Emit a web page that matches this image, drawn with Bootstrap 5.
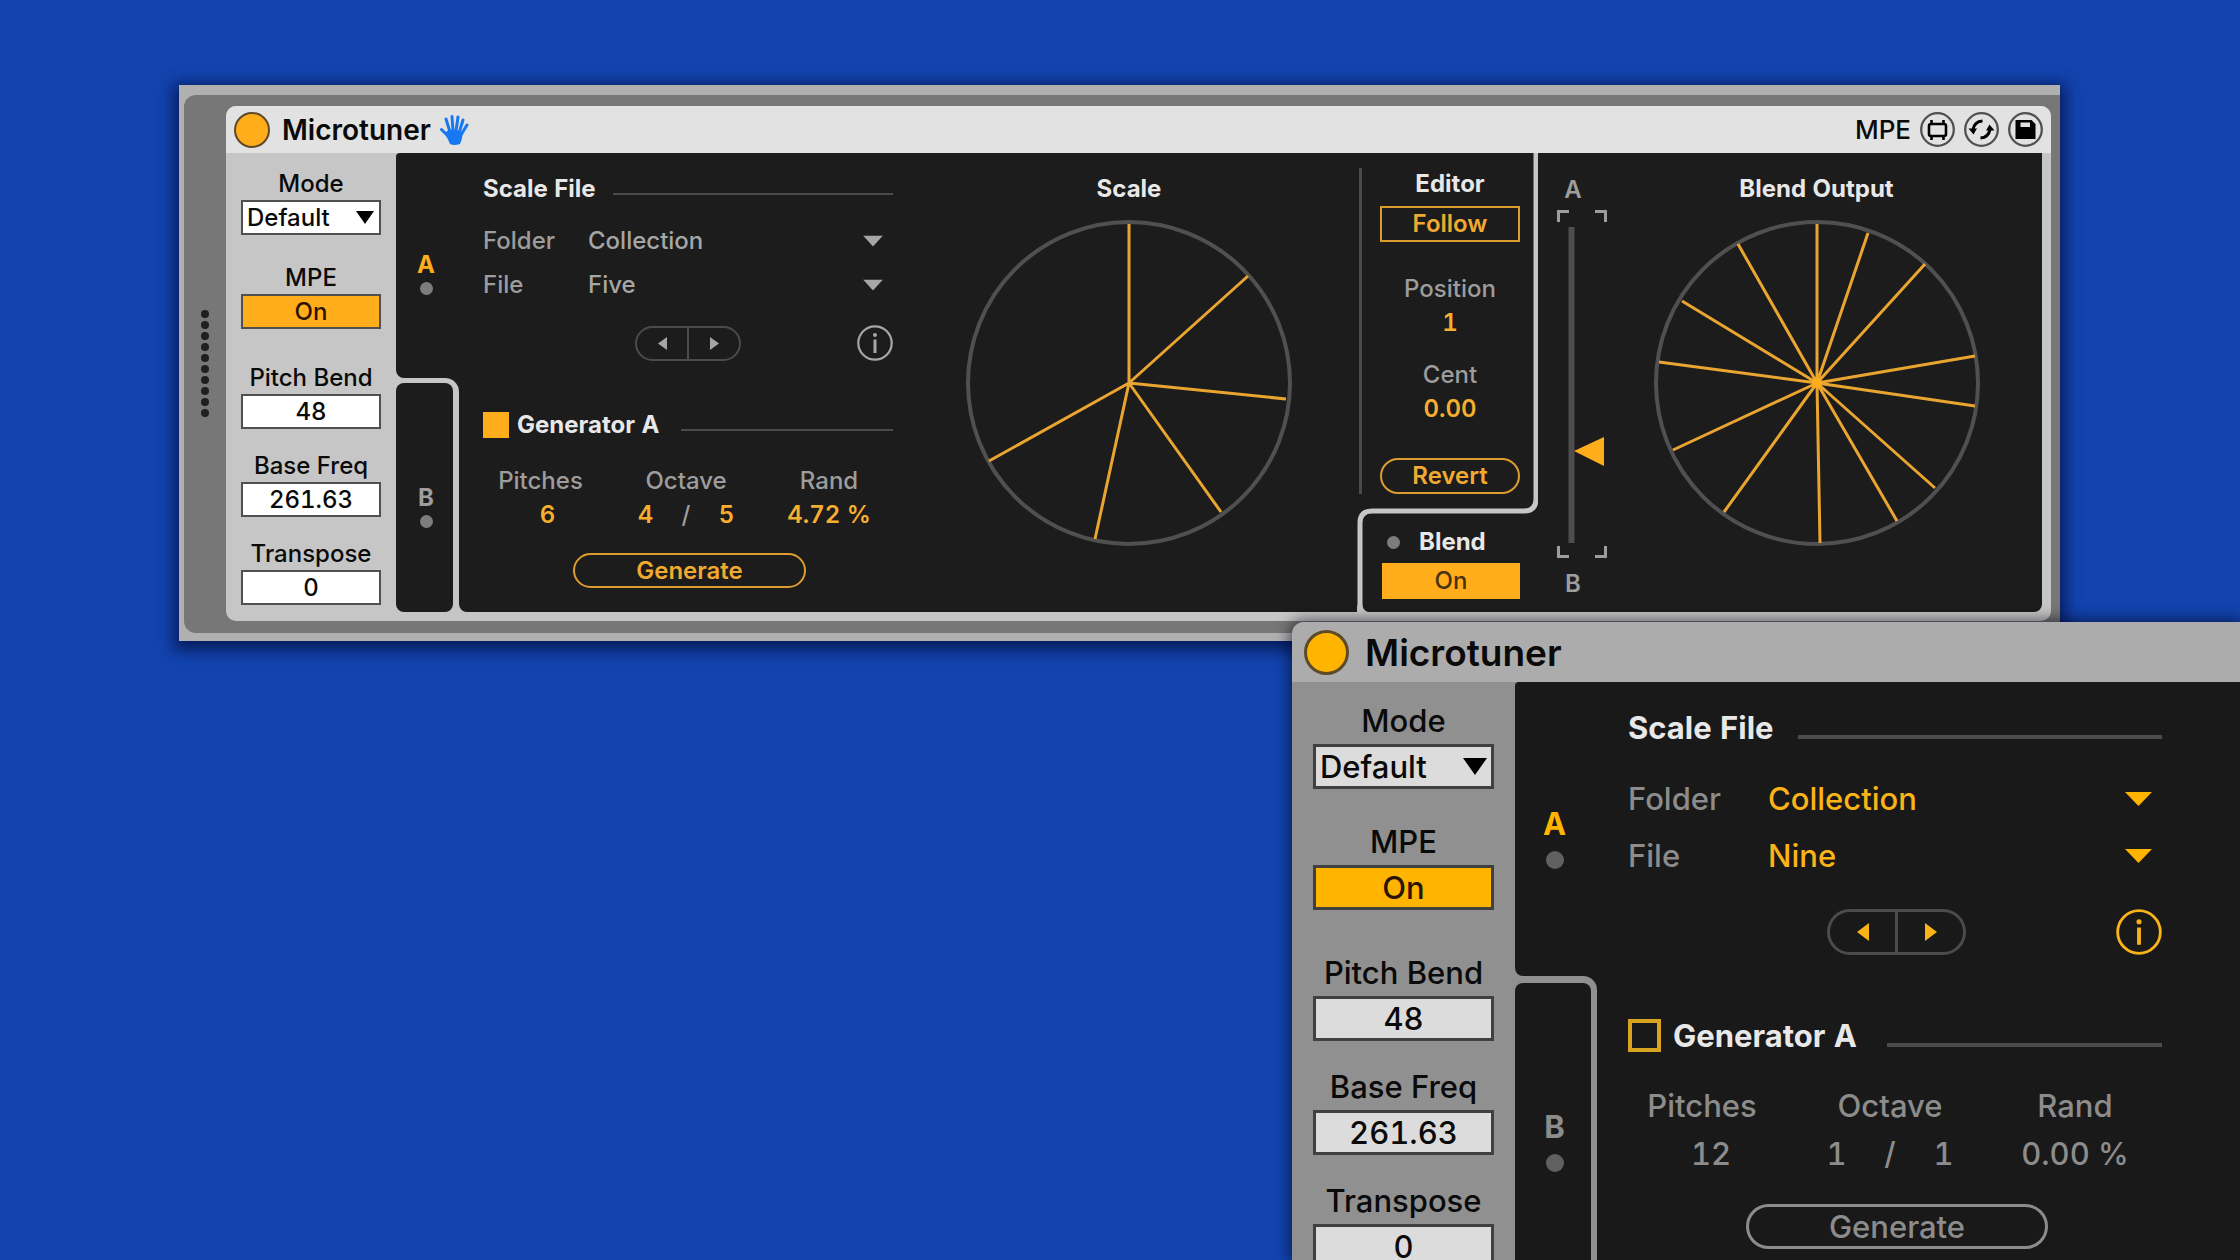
<!DOCTYPE html>
<html lang="en">
<head>
<meta charset="utf-8">
<meta name="viewport" content="width=device-width, initial-scale=1">
<title>Microtuner</title>
<link href="https://cdn.jsdelivr.net/npm/bootstrap@5.3.0/dist/css/bootstrap.min.css" rel="stylesheet">
<style>
  body { background: #1243ae; font-family: Inter, "Liberation Sans", sans-serif; min-height: 100vh; overflow: hidden; }

  /* per-window size and colour sets */
  .device {
    --fs: 24px; --title-fs: 28px; --head-h: 47px; --lamp: 36px;
    --side-w: 170px; --side-pad: 15px; --box-w: 140px; --box-h: 35px; --label-h: 32px; --label-gap: 0px; --bw: 2px;
    --gap-a: 27px; --gap-b: 33px; --gap-c: 21px;
    --tab-w: 63px; --tab-a-h: 225px; --tab-pad: 5px; --tab-a-top: 100px; --tab-b-top: 103px; --dot: 13px; --dot-top: 5px;
    --sec-w: 410px; --sec-x: 24px; --sec-y: 18px; --row-h: 36px; --pick-h: 44px; --pick-x: 105px; --pick-top: 12px;
    --nav-top: 18px; --nav-x: 152px; --nav-w: 106px; --nav-h: 35px; --gen-top: 46px; --chk: 26px;
    --stat-top: 21px; --stat-h: 34px; --stat-cols: 115px 176px 110px; --num-w: 30px; --slash-w: 51px; --pitch-pad: 14px;
    --go-top: 21px; --go-x: 90px; --go-w: 233px; --rule: 2px; --rule-top: 10px; --rule-x: 17px; --rule-gen: 22px;
    --head: #e2e2e2; --chrome: #c6c6c6; --field: #fff; --panel: #1c1c1c; --accent: #ffad1a; --accent-line: #dd9d2e;
    --edge: #505050; --dim: #9d9d9d; --pick: #a6a6a6; --value: #f6ae2f; --go: #f0aa30; --dotc: #7d7d7d;
    font-size: var(--fs); font-weight: 500; color: #0a0a0a; font-variant-numeric: tabular-nums;
  }
  .device-front {
    --fs: 31px; --title-fs: 37px; --head-h: 60px; --lamp: 45px;
    --side-w: 223px; --side-pad: 22px; --box-w: 181px; --box-h: 45px; --label-h: 34px; --label-gap: 6px; --bw: 3px;
    --gap-a: 36px; --gap-b: 46px; --gap-c: 29px;
    --tab-w: 82px; --tab-a-h: 294px; --tab-pad: 7px; --tab-a-top: 126px; --tab-b-top: 128px; --dot: 18px; --dot-top: 12px;
    --sec-w: 534px; --sec-x: 31px; --sec-y: 22px; --row-h: 46px; --pick-h: 57px; --pick-x: 140px; --pick-top: 20px;
    --nav-top: 25px; --nav-x: 199px; --nav-w: 139px; --nav-h: 46px; --gen-top: 57px; --chk: 33px;
    --stat-top: 24px; --stat-h: 48px; --stat-cols: 148px 228px 142px; --num-w: 40px; --slash-w: 67px; --pitch-pad: 18px;
    --go-top: 26px; --go-x: 118px; --go-w: 302px; --rule: 4px; --rule-top: 19px; --rule-x: 24px; --rule-gen: 30px;
    --head: #acacac; --chrome: #909090; --field: #dcdcdc; --panel: #191919; --accent: #ffb400; --accent-line: #d9a322;
    --edge: #404040; --dim: #8c8c8c; --pick: #fbb417; --value: #8c8c8c; --go: #8c8c8c; --dotc: #606060;
  }

  /* floating windows */
  .win-back { position: absolute; left: 179px; right: 180px; top: 85px; background: #b0b0b0; padding: 10px 0 8px 5px;
    box-shadow: 0 4px 14px 5px rgba(0, 5, 40, .62); }
  .rack { background: #777; border-radius: 12px 0 0 12px; padding: 11px 9px 12px 0; }
  .grip { width: 42px; flex: none; }
  .win-front { position: absolute; left: 1292px; right: 0; top: 622px; bottom: 0; overflow: hidden;
    background: var(--chrome); border-radius: 12px 0 0 0; }
  .front-shadow { position: absolute; left: 1292px; right: 0; top: 622px; bottom: 0; border-radius: 12px 0 0 0; box-shadow: 0 0 15px 2px rgba(0, 0, 20, .6); }
  .shell { background: var(--chrome); border-radius: 10px; overflow: hidden; }
  .device-body { padding-bottom: 9px; min-height: 468px; }

  .titlebar { background: var(--head); height: var(--head-h); }
  .title-text { font-size: var(--title-fs); font-weight: 600; line-height: 1; margin: 0 0 0 12px; }
  .device-front .title-text { margin-left: 16px; }
  .lamp { width: var(--lamp); height: var(--lamp); border-radius: 50%; border: var(--bw) solid #5c4a28; background: var(--accent); padding: 0; }
  .tool { width: 35px; height: 35px; padding: 0; border: 0; background: none; display: block; }
  .tool svg, .nav-btn svg, .info svg { display: block; }
  .tools { gap: 9px; }
  .mpe-tag { font-size: 26px; line-height: 1; }

  .side { width: var(--side-w); flex: none; padding-top: var(--side-pad); }
  .side label, .side .cap { line-height: var(--label-h); padding-bottom: var(--label-gap); display: block; }
  .box { width: var(--box-w); height: var(--box-h); border: var(--bw) solid var(--edge); background: var(--field); color: #0a0a0a;
    padding: 0; text-align: center; border-radius: 0; line-height: 1; font-size: var(--fs); font-weight: 500; font-variant-numeric: tabular-nums; display: block; }
  select.box { appearance: none; text-align: left; padding-left: 4px; }
  .pick-wrap { position: relative; }
  .pick-wrap svg { position: absolute; top: 50%; transform: translateY(-50%); pointer-events: none; }
  .pick-wrap .box-arrow { right: 7px; }
  .box-on { background: var(--accent); color: #2a1600; }
  .gap-a { margin-top: var(--gap-a); } .gap-b { margin-top: var(--gap-b); } .gap-c { margin-top: var(--gap-c); }

  .tabs { width: var(--tab-w); flex: none; background: linear-gradient(90deg, var(--chrome) 50%, var(--panel) 50%); }
  .tab-btn { background: var(--panel); border: 0; display: flex; flex-direction: column; align-items: center; width: 100%; font-weight: 700; line-height: 1; color: var(--dim); }
  .tab-a { height: var(--tab-a-h); border-radius: 4px 0 0 8px; padding: var(--tab-a-top) 3px 0 0; color: var(--accent); }
  .tab-b-frame { background: var(--chrome); padding: var(--tab-pad) 6px 0 0; border-radius: 0 14px 0 0; flex: 1; display: flex; }
  .tab-b { border-radius: 8px; padding: var(--tab-b-top) 0 0 3px; }
  .dot { width: var(--dot); height: var(--dot); border-radius: 50%; background: var(--dotc); display: block; flex: none; }
  .tab-btn .dot { margin-top: var(--dot-top); }

  .panel { background: var(--panel); color: var(--dim); }
  .panel-main { border-radius: 0 0 0 8px; padding-left: var(--sec-x); }
  .section { width: var(--sec-w); flex: none; padding-top: var(--sec-y); }
  .head-row { height: var(--row-h); }
  .strong { color: #e8e8e8; font-weight: 700; font-size: var(--fs); line-height: 1; margin: 0; }
  .hrule { flex: 1; height: var(--rule); background: #4b4b4b; margin-top: var(--rule-top); margin-left: var(--rule-x); }
  .gen-row .hrule { margin-left: var(--rule-gen); }
  .pick-row { height: var(--pick-h); line-height: 1; }
  .pick-row label { width: var(--pick-x); flex: none; }
  .pick { appearance: none; background: none; border: 0; padding: 0; width: 100%; color: var(--pick); font-size: var(--fs); font-weight: 500; line-height: var(--pick-h); }
  .pick-wrap .pick-arrow { right: 10px; }
  .pick-first { margin-top: var(--pick-top); }
  .nav-row { margin-top: var(--nav-top); }
  .nav-pill { margin-left: var(--nav-x); width: var(--nav-w); height: var(--nav-h); border: var(--bw) solid #4b4b4b; border-radius: 40px; overflow: hidden; }
  .nav-btn { flex: 1; background: none; border: 0; color: var(--pick); padding: 0; display: flex; justify-content: center; align-items: center; }
  .nav-btn + .nav-btn { border-left: var(--bw) solid #4b4b4b; }
  .info { background: none; border: 0; padding: 0; color: var(--pick); }
  .gen-row { margin-top: var(--gen-top); }
  .chk { appearance: none; width: var(--chk); height: var(--chk); margin: 0; border: 3px solid var(--accent-line); flex: none; }
  .device-front .chk { border-width: 4px; }
  .device .chk:checked { background: var(--accent); border-color: var(--accent); }
  .stats { display: grid; grid-template-columns: var(--stat-cols); grid-auto-rows: var(--stat-h); line-height: var(--stat-h); text-align: center; margin-top: var(--stat-top); }
  .num { background: none; border: 0; padding: 0; width: 100%; color: var(--value); text-align: center; font-weight: 600; font-size: var(--fs); font-variant-numeric: tabular-nums; line-height: var(--stat-h); }
  .device-front .num { font-weight: 500; }
  .num-pitch { padding-left: var(--pitch-pad); }
  .num-oct { width: var(--num-w); }
  .slash { width: var(--slash-w); }
  .pill { border: var(--bw) solid var(--accent-line); color: var(--go); background: none; border-radius: 40px; padding: 0; line-height: 1; font-weight: 600; height: var(--box-h); font-size: var(--fs); }
  .go { margin: var(--go-top) 0 0 var(--go-x); width: var(--go-w); }
  .device-front .go { border-color: #8c8c8c; font-weight: 500; }

  .pie-title { line-height: 36px; padding-top: 18px; margin-bottom: 11px; }
  .editor-col { width: 181px; flex: none; position: relative; }
  .divider { position: absolute; left: 0; top: 0; pointer-events: none; }
  .editor { margin: 15px 0 0 2px; border-left: 3px solid #4b4b4b; text-align: center; line-height: 34px; }
  .editor .strong, .blend-head .strong { line-height: 32px; }
  .editor label { margin-top: 30px; }
  .editor .num + label { margin-top: 18px; }
  .follow { border-radius: 0; width: 140px; height: 36px; margin-top: 6px; }
  .revert { margin-top: 32px; }
  .blend-head { margin-top: 32px; padding-left: 30px; gap: 19px; }
  .blend-on { margin: 5px 0 0 25px; width: 138px; height: 36px; border: 0; background: var(--accent); color: #4a3210; line-height: 1; padding: 0; font-weight: 500; }
  .panel-out { width: 504px; border-radius: 0 0 8px 0; padding-right: 16px; margin-right: 9px; }
  .fader { width: 50px; margin-left: 19px; flex: none; font-weight: 600; padding-top: 19px; line-height: 36px; }
  .fader .end { width: 32px; text-align: center; display: block; }
  .fader-body { position: relative; margin: 2px 0 8px; }
  .fader-body svg { display: block; }
  .fader-body input { position: absolute; inset: 0; width: 100%; height: 100%; opacity: 0; margin: 0; writing-mode: vertical-lr; }
</style>
<script src="https://cdn.jsdelivr.net/npm/bootstrap@5.3.0/dist/js/bootstrap.bundle.min.js"></script>
</head>
<body>

<!-- rear window: full device -->
<main class="win-back device">
  <div class="rack d-flex">
    <div class="grip d-flex align-items-center justify-content-center">
      <svg width="10" height="112" fill="#1f1f1f" aria-hidden="true"><circle cx="5" cy="6" r="4"/><circle cx="5" cy="17" r="4"/><circle cx="5" cy="28" r="4"/><circle cx="5" cy="39" r="4"/><circle cx="5" cy="50" r="4"/><circle cx="5" cy="61" r="4"/><circle cx="5" cy="72" r="4"/><circle cx="5" cy="83" r="4"/><circle cx="5" cy="94" r="4"/><circle cx="5" cy="105" r="4"/></svg>
    </div>
    <div class="shell flex-grow-1">
      <header class="titlebar d-flex align-items-center px-2">
        <button class="lamp" aria-label="Device on"></button>
        <h1 class="title-text">Microtuner</h1>
        <svg class="ms-2" width="30" height="32" viewBox="0 0 30 32" aria-hidden="true"><g stroke="#1778f2" stroke-width="3" stroke-linecap="round" fill="none"><path d="M11 18 7 5M14 17 13 2.500M17 17 19 3M20 19 24 6M22 21 28 11M10 23 2.500 15.500"/></g><path fill="#1778f2" d="M8 17Q14 14 22 18Q25 21 21 30Q15 32 11 30Q9 25 6 20Z"/></svg>
        <div class="tools ms-auto d-flex align-items-center">
          <span class="mpe-tag">MPE</span>
          <button class="tool" aria-label="Map"><svg width="35" height="35" viewBox="-17.500 -17.500 35 35"><circle r="16.300" fill="none" stroke="#505050" stroke-width="2.300"/><g fill="none" stroke="#000" stroke-width="2.600"><rect x="-8.500" y="-5.500" width="17" height="12" rx="2"/><path d="M-6-9.500V-5M6-9.500V-5M-6 6V10.500M6 6V10.500"/></g></svg></button>
          <button class="tool" aria-label="Swap"><svg width="35" height="35" viewBox="-17.500 -17.500 35 35"><circle r="16.300" fill="none" stroke="#505050" stroke-width="2.300"/><g fill="none" stroke="#000" stroke-width="3"><path d="M1-8.500Q-7-8-8.500 0M-1 8.500Q7 8 8.500 0"/></g><path d="M-13-1H-4.500L-8 5ZM13 1H4.500L8-5Z"/></svg></button>
          <button class="tool" aria-label="Save"><svg width="35" height="35" viewBox="-17.500 -17.500 35 35"><circle r="16.300" fill="none" stroke="#505050" stroke-width="2.300"/><path fill-rule="evenodd" d="M-10-9.500H6L10-5.500V9.500H-10ZM-5-7V-2.500H4.500V-7Z"/></svg></button>
        </div>
      </header>

      <div class="device-body d-flex">
        <div class="side d-flex flex-column align-items-center text-center">
          <div><label for="m1">Mode</label>
            <div class="pick-wrap"><select class="box" id="m1"><option>Default</option></select>
              <svg class="box-arrow" width="18" height="14"><path d="M0 0H18L9 13Z"/></svg></div></div>
          <div class="gap-a"><span class="cap">MPE</span><button class="box box-on">On</button></div>
          <div class="gap-b"><label for="pb1">Pitch Bend</label><input class="box" id="pb1" value="48"></div>
          <div class="gap-c"><label for="bf1">Base Freq</label><input class="box" id="bf1" value="261.63"></div>
          <div class="gap-c"><label for="tr1">Transpose</label><input class="box" id="tr1" value="0"></div>
        </div>

        <nav class="tabs d-flex flex-column">
          <button class="tab-btn tab-a">A<span class="dot"></span></button>
          <div class="tab-b-frame"><button class="tab-btn tab-b">B<span class="dot"></span></button></div>
        </nav>

        <div class="panel panel-main flex-grow-1 d-flex">
          <section class="section">
            <div class="head-row d-flex align-items-center"><h2 class="strong">Scale File</h2><span class="hrule"></span></div>
            <div class="pick-row pick-first d-flex align-items-center"><label for="fo1">Folder</label>
              <div class="pick-wrap flex-grow-1"><select class="pick" id="fo1"><option>Collection</option></select><svg class="pick-arrow" width="20" height="11" fill="#a6a6a6"><path d="M0 0H20L10 11Z"/></svg></div></div>
            <div class="pick-row d-flex align-items-center"><label for="fi1">File</label>
              <div class="pick-wrap flex-grow-1"><select class="pick" id="fi1"><option>Five</option></select><svg class="pick-arrow" width="20" height="11" fill="#a6a6a6"><path d="M0 0H20L10 11Z"/></svg></div></div>
            <div class="nav-row d-flex align-items-center">
              <div class="nav-pill d-flex">
                <button class="nav-btn" aria-label="Previous"><svg width="9" height="13" fill="currentColor"><path d="M9 0V13L0 6.500Z"/></svg></button>
                <button class="nav-btn" aria-label="Next"><svg width="9" height="13" fill="currentColor"><path d="M0 0V13L9 6.500Z"/></svg></button>
              </div>
              <button class="info ms-auto" aria-label="Info"><svg width="36" height="36" viewBox="0 0 36 36"><circle cx="18" cy="18" r="16.700" fill="none" stroke="currentColor" stroke-width="2.200"/><path d="M18 14.500V28" stroke="currentColor" stroke-width="3"/><circle cx="18" cy="10" r="2" fill="currentColor"/></svg></button>
            </div>
            <div class="head-row gen-row d-flex align-items-center"><input type="checkbox" class="chk" id="g1" checked><label for="g1" class="strong ps-2">Generator A</label><span class="hrule"></span></div>
            <div class="stats">
              <label for="p1">Pitches</label><label for="o1">Octave</label><label for="r1">Rand</label>
              <input class="num num-pitch" id="p1" value="6">
              <div class="d-flex justify-content-center"><input class="num num-oct" id="o1" value="4"><span class="slash">/</span><input class="num num-oct" aria-label="Octave divisor" value="5"></div>
              <input class="num" id="r1" value="4.72 %">
            </div>
            <button class="pill go">Generate</button>
          </section>
          <section class="flex-grow-1 text-center ps-2">
            <h2 class="strong pie-title">Scale</h2>
            <svg width="330" height="330" viewBox="-165 -165 330 330" role="img" aria-label="Scale pitches"><circle r="161" fill="none" stroke="#505050" stroke-width="4"/><path d="M0 0V-159M0 0 119-107M0 0 157 16M0 0 92 129M0 0-34 156M0 0-140 78" stroke="#e9a530" stroke-width="3"/></svg>
          </section>
        </div>

        <div class="panel editor-col">
          <svg class="divider" width="181" height="459" aria-hidden="true"><path d="M3 455V370Q3 358 15 358H167Q179 358 179 346V0" fill="none" stroke="#c6c6c6" stroke-width="5"/><path d="M-5 459Q1 457 1 449H5Q5 457 11 459Z" fill="#c6c6c6"/></svg>
          <section class="editor">
            <h2 class="strong">Editor</h2>
            <button class="pill follow d-block mx-auto">Follow</button>
            <label for="pos" class="d-block">Position</label>
            <input class="num d-block" id="pos" value="1">
            <label for="cent" class="d-block">Cent</label>
            <input class="num d-block" id="cent" value="0.00">
            <button class="pill follow revert d-block mx-auto rounded-pill">Revert</button>
          </section>
          <div class="blend-head d-flex align-items-center"><span class="dot"></span><h2 class="strong">Blend</h2></div>
          <button class="blend-on">On</button>
        </div>

        <div class="panel panel-out d-flex">
          <div class="fader">
            <span class="end">A</span>
            <div class="fader-body">
              <svg width="50" height="348"><g fill="none" stroke="#9d9d9d" stroke-width="3"><path d="M1.500 12V1.500H12M38 1.500H48.500V12M1.500 336V346.500H12M38 346.500H48.500V336"/></g><path d="M14.500 17V333" stroke="#4d4d4d" stroke-width="6"/><path d="M17 241 47 227V256Z" fill="#ffad1a"/></svg>
              <input type="range" aria-label="Blend A to B">
            </div>
            <span class="end">B</span>
          </div>
          <section class="flex-grow-1 text-center">
            <h2 class="strong pie-title">Blend Output</h2>
            <svg width="330" height="330" viewBox="-165 -165 330 330" role="img" aria-label="Blended pitches"><circle r="161" fill="none" stroke="#505050" stroke-width="4"/><path d="M0 0V-159M0 0 51-150M0 0 108-119M0 0 158-27M0 0 158 23M0 0 118 105M0 0 80 138M0 0 3 160M0 0-93 129M0 0-144 67M0 0-158-21M0 0-135-82M0 0-79-139" stroke="#e9a530" stroke-width="3"/><circle r="5" fill="#ffad1a"/></svg>
          </section>
        </div>
      </div>
    </div>
  </div>
</main>

<!-- front window: enlarged device running past the screen edge -->
<div class="front-shadow"></div>
<aside class="win-front device device-front d-flex flex-column">
  <header class="titlebar d-flex align-items-center px-2 flex-shrink-0">
    <button class="lamp ms-1" aria-label="Device on"></button>
    <h1 class="title-text">Microtuner</h1>
  </header>
  <div class="d-flex flex-grow-1">
    <div class="side d-flex flex-column align-items-center text-center">
      <div><label for="m2">Mode</label>
        <div class="pick-wrap"><select class="box" id="m2"><option>Default</option></select>
          <svg class="box-arrow" width="24" height="18"><path d="M0 0H24L12 17Z"/></svg></div></div>
      <div class="gap-a"><span class="cap">MPE</span><button class="box box-on">On</button></div>
      <div class="gap-b"><label for="pb2">Pitch Bend</label><input class="box" id="pb2" value="48"></div>
      <div class="gap-c"><label for="bf2">Base Freq</label><input class="box" id="bf2" value="261.63"></div>
      <div class="gap-c"><label for="tr2">Transpose</label><input class="box" id="tr2" value="0"></div>
    </div>
    <nav class="tabs d-flex flex-column">
      <button class="tab-btn tab-a">A<span class="dot"></span></button>
      <div class="tab-b-frame"><button class="tab-btn tab-b">B<span class="dot"></span></button></div>
    </nav>
    <div class="panel panel-main flex-grow-1 d-flex">
      <section class="section">
        <div class="head-row d-flex align-items-center"><h2 class="strong">Scale File</h2><span class="hrule"></span></div>
        <div class="pick-row pick-first d-flex align-items-center"><label for="fo2">Folder</label>
          <div class="pick-wrap flex-grow-1"><select class="pick" id="fo2"><option>Collection</option></select><svg class="pick-arrow" width="27" height="14" fill="#ffb400"><path d="M0 0H27L13.500 14Z"/></svg></div></div>
        <div class="pick-row d-flex align-items-center"><label for="fi2">File</label>
          <div class="pick-wrap flex-grow-1"><select class="pick" id="fi2"><option>Nine</option></select><svg class="pick-arrow" width="27" height="14" fill="#ffb400"><path d="M0 0H27L13.500 14Z"/></svg></div></div>
        <div class="nav-row d-flex align-items-center">
          <div class="nav-pill d-flex">
            <button class="nav-btn" aria-label="Previous"><svg width="12" height="18" fill="currentColor"><path d="M12 0V18L0 9Z"/></svg></button>
            <button class="nav-btn" aria-label="Next"><svg width="12" height="18" fill="currentColor"><path d="M0 0V18L12 9Z"/></svg></button>
          </div>
          <button class="info ms-auto" aria-label="Info"><svg width="46" height="46" viewBox="0 0 36 36"><circle cx="18" cy="18" r="16.700" fill="none" stroke="currentColor" stroke-width="2.200"/><path d="M18 14.500V28" stroke="currentColor" stroke-width="3"/><circle cx="18" cy="10" r="2" fill="currentColor"/></svg></button>
        </div>
        <div class="head-row gen-row d-flex align-items-center"><input type="checkbox" class="chk" id="g2"><label for="g2" class="strong ps-2 ms-1">Generator A</label><span class="hrule"></span></div>
        <div class="stats">
          <label for="p2">Pitches</label><label for="o2">Octave</label><label for="r2">Rand</label>
          <input class="num num-pitch" id="p2" value="12">
          <div class="d-flex justify-content-center"><input class="num num-oct" id="o2" value="1"><span class="slash">/</span><input class="num num-oct" aria-label="Octave divisor" value="1"></div>
          <input class="num" id="r2" value="0.00 %">
        </div>
        <button class="pill go">Generate</button>
      </section>
    </div>
  </div>
</aside>
</body>
</html>
